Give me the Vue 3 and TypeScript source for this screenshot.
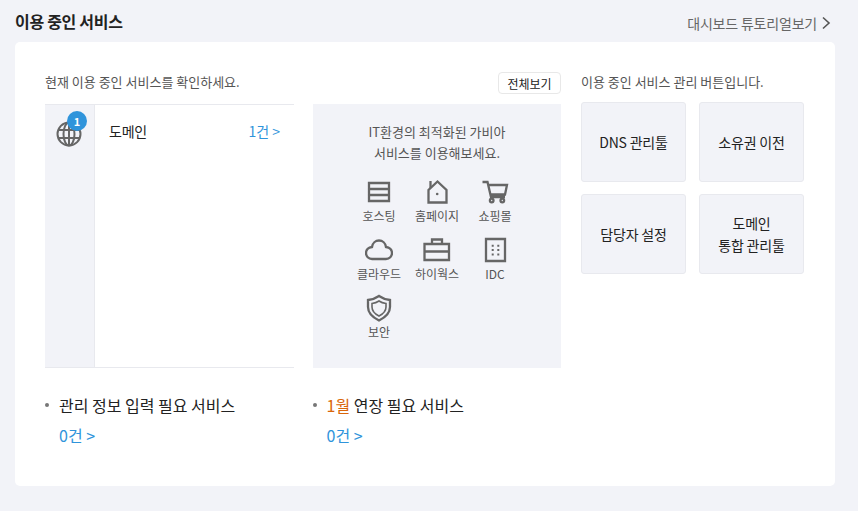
<script setup lang="ts">
interface Item { label: string; icon: string }
const items: Item[] = [
  { label: '호스팅', icon: 'host' },
  { label: '홈페이지', icon: 'home' },
  { label: '쇼핑몰', icon: 'cart' },
  { label: '클라우드', icon: 'cloud' },
  { label: '하이웍스', icon: 'case' },
  { label: 'IDC', icon: 'idc' },
  { label: '보안', icon: 'shield' },
]
const buttons: string[] = ['DNS 관리툴', '소유권 이전', '담당자 설정', '도메인\n통합 관리툴']
</script>

<template>
  <div class="page">
    <header class="top">
      <h2 class="title">이용 중인 서비스</h2>
      <a class="tutorial">대시보드 튜토리얼보기
        <svg width="10" height="14" viewBox="0 0 10 14"><path d="M2 1.500 8 7l-6 5.500" fill="none" stroke="#555" stroke-width="1.600"/></svg>
      </a>
    </header>
    <section class="card">
      <div class="main">
        <div class="head">
          <p class="desc">현재 이용 중인 서비스를 확인하세요.</p>
          <button class="all">전체보기</button>
        </div>
        <div class="panels">
          <div class="table">
            <div class="side">
              <div class="globe">
                <svg width="26" height="26" viewBox="0 0 26 26" fill="none" stroke="#666" stroke-width="2">
                  <circle cx="13" cy="13" r="11.500"/>
                  <ellipse cx="13" cy="13" rx="5.500" ry="11.500"/>
                  <path d="M13 1.500v23M2 9h22M2 17h22"/>
                </svg>
                <span class="badge">1</span>
              </div>
            </div>
            <div class="row">
              <span class="name">도메인</span>
              <span class="count">1건 &gt;</span>
            </div>
          </div>
          <div class="promo">
            <p class="promo-text">IT환경의 최적화된 가비아<br>서비스를 이용해보세요.</p>
            <ul class="grid">
              <li v-for="it in items" :key="it.label" class="cell">
                <svg class="ico" width="28" height="28" viewBox="0 0 28 28" fill="none" stroke="#666" stroke-width="2.300">
                  <template v-if="it.icon === 'host'">
                    <path d="M4 5h20v18H4zM4 11h20M4 17h20"/>
                  </template>
                  <template v-else-if="it.icon === 'home'">
                    <path d="M5.500 24.500V12L14.500 3.500 23.500 12V24.500z"/>
                    <path d="M7.500 3V10"/>
                    <circle cx="14.200" cy="16" r="1.300" fill="#666" stroke="none"/>
                  </template>
                  <template v-else-if="it.icon === 'cart'">
                    <path d="M1.500 4H6.500L10 19H24M7.500 7H26L24 16.500H9.500"/>
                    <circle cx="10.700" cy="22.500" r="1.800"/>
                    <circle cx="21.300" cy="22.500" r="1.800"/>
                  </template>
                  <template v-else-if="it.icon === 'cloud'">
                    <path d="M7 23C3.500 23 1 20.300 1 17 1 13.700 3.500 11.300 7 11 7.500 7 10.500 4.500 14 4.500 17.500 4.500 20.500 7 21 11 24.500 11.300 27 13.700 27 17 27 20.300 24.500 23 21 23Z"/>
                  </template>
                  <template v-else-if="it.icon === 'case'">
                    <path d="M1.500 8H26V24H1.500zM1.500 15.500H26M9 8V3.500H19V8"/>
                  </template>
                  <template v-else-if="it.icon === 'idc'">
                    <path d="M5 3h19v22H5z"/>
                    <path d="M10.700 9.700h2M16.300 9.700h2M10.700 14h2M16.300 14h2M10.700 18.500h2M16.300 18.500h2" stroke-width="2"/>
                  </template>
                  <template v-else>
                    <path d="M14 2Q19 5.500 25 6V13C25 19.500 20 23.500 14 26.500 8 23.500 3 19.500 3 13V6Q9 5.500 14 2Z"/>
                    <path d="M14 7Q17 9 21 9.500V13C21 17 18 20 14 22 10 20 7 17 7 13V9.500Q11 9 14 7Z" stroke-width="1.600"/>
                  </template>
                </svg>
                <span class="cell-label">{{ it.label }}</span>
              </li>
            </ul>
          </div>
        </div>
        <div class="foot">
          <div class="foot-item">
            <p class="foot-title">관리 정보 입력 필요 서비스</p>
            <p class="foot-count">0건 &gt;</p>
          </div>
          <div class="foot-item">
            <p class="foot-title"><em>1월</em> 연장 필요 서비스</p>
            <p class="foot-count">0건 &gt;</p>
          </div>
        </div>
      </div>
      <aside class="manage">
        <p class="desc manage-desc">이용 중인 서비스 관리 버튼입니다.</p>
        <div class="btns">
          <button v-for="b in buttons" :key="b" class="btn">{{ b }}</button>
        </div>
      </aside>
    </section>
  </div>
</template>

<style>
html, body { margin: 0; background: #f2f3f8; }
</style>

<style scoped>
* { box-sizing: border-box; }
.page {
  height: 511px;
  padding: 0 23px 0 15px;
  background: #f2f3f8;
  font-family: "Noto Sans CJK KR", "Noto Sans", sans-serif;
  overflow: hidden;
}
p, h2, ul { margin: 0; padding: 0; }
.top {
  height: 42px;
  display: flex;
  align-items: center;
  justify-content: space-between;
  padding-right: 4px;
}
.title { font-size: 16px; font-weight: 700; color: #222; line-height: 42px; letter-spacing: -0.3px; }
.tutorial {
  display: flex;
  align-items: center;
  gap: 4px;
  font-size: 14px;
  letter-spacing: -0.2px;
  color: #666;
  padding-top: 3px;
}
.card {
  height: 444px;
  background: #fff;
  border-radius: 5px;
  padding: 30px 0 0 30px;
  display: flex;
  gap: 20px;
}
.main { width: 516px; }
.head {
  height: 32px;
  display: flex;
  justify-content: space-between;
  align-items: flex-start;
}
.desc { font-size: 13px; color: #555; line-height: 20px; }
.all {
  width: 63px;
  height: 22px;
  border: 1px solid #e8e8e8;
  border-radius: 4px;
  background: #fff;
  padding: 0;
  font: inherit;
  font-size: 12px;
  color: #222;
}
.panels { display: flex; gap: 19px; height: 264px; }
.table {
  width: 249px;
  display: flex;
  border-top: 1px solid #e8e9ee;
  border-bottom: 1px solid #e8e9ee;
}
.side {
  width: 50px;
  background: #f2f3f8;
  border-right: 1px solid #e8e9ee;
  padding: 14px 0 0 11px;
}
.globe { position: relative; width: 26px; height: 26px; margin-top: 2px; }
.badge {
  position: absolute;
  left: 11px;
  top: -10px;
  width: 20px;
  height: 20px;
  border-radius: 50%;
  background: #2f94db;
  color: #fff;
  font-size: 11px;
  font-weight: 700;
  text-align: center;
  line-height: 20px;
}
.row {
  flex: 1;
  display: flex;
  justify-content: space-between;
  padding: 15px 14px 0 14px;
  line-height: 22px;
  height: 40px;
}
.name { font-size: 14px; color: #222; letter-spacing: -0.2px; }
.count { font-size: 14px; color: #2f94db; }
.promo {
  width: 248px;
  background: #f2f3f8;
  padding-top: 17px;
}
.promo-text { font-size: 13px; line-height: 21px; color: #555; text-align: center; }
.grid {
  list-style: none;
  display: grid;
  grid-template-columns: repeat(3, 58px);
  grid-auto-rows: 58px;
  justify-content: center;
  margin-top: 15px;
  padding-left: 0;
}
.cell { display: flex; flex-direction: column; align-items: center; }
.ico { display: block; }
.cell-label { font-size: 12px; color: #555; line-height: 18px; margin-top: 1px; white-space: nowrap; }
.foot { display: flex; gap: 19px; padding-top: 26px; }
.foot-item { width: 249px; padding-left: 14px; position: relative; }
.foot-item::before {
  content: "";
  position: absolute;
  left: 0;
  top: 9px;
  width: 4px;
  height: 4px;
  border-radius: 50%;
  background: #777;
}
.foot-title { font-size: 16px; color: #222; line-height: 22px; }
.foot-title em { font-style: normal; color: #d9660a; }
.foot-count { font-size: 16px; color: #2f94db; line-height: 22px; margin-top: 8px; }
.manage { width: 223px; }
.btns {
  display: grid;
  grid-template-columns: 105px 105px;
  grid-auto-rows: 80px;
  gap: 12px 13px;
  margin-top: 10px;
}
.btn {
  background: #f2f3f8;
  border: 1px solid #e8e9ee;
  border-radius: 3px;
  padding: 0;
  font: inherit;
  font-size: 14px;
  letter-spacing: -0.2px;
  line-height: 22px;
  color: #222;
  white-space: pre-line;
}
</style>
